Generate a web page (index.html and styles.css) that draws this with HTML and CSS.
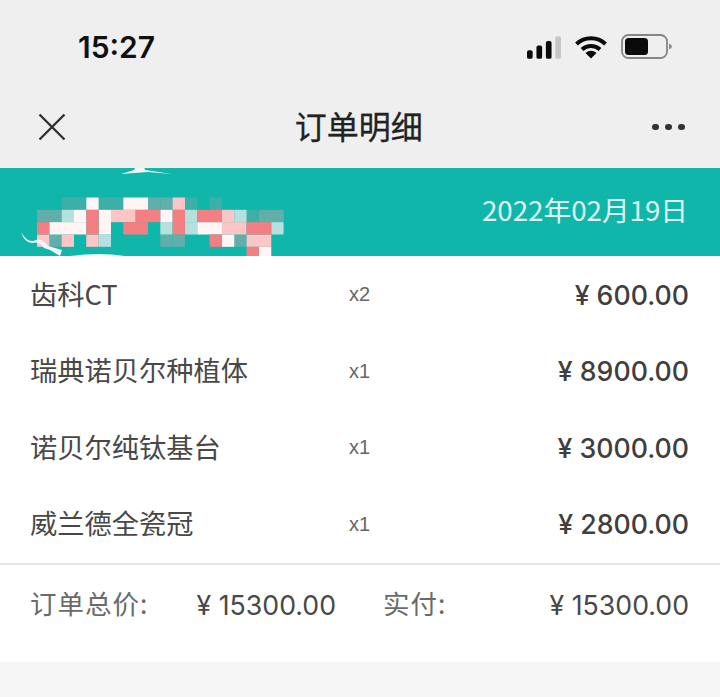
FILE: index.html
```html
<!DOCTYPE html>
<html lang="zh-CN">
<head>
<meta charset="utf-8">
<title>订单明细</title>
<link rel="stylesheet" href="styles.css">
</head>
<body>
<div class="page">
  <div class="status">
    <span class="time">15:27</span>
    <div class="status-icons">
      <svg class="signal" width="34" height="23" viewBox="0 0 36 24">
        <rect x="0" y="15" width="6" height="9" rx="2" fill="#0a0a0a"/>
        <rect x="10" y="10" width="6" height="14" rx="2" fill="#0a0a0a"/>
        <rect x="20" y="5" width="6" height="19" rx="2" fill="#0a0a0a"/>
        <rect x="30" y="0" width="6" height="24" rx="2" fill="#c6c6c6"/>
      </svg>
      <svg class="wifi" width="32" height="24" viewBox="0 0 32 24">
        <path d="M1.5 9 A21 21 0 0 1 30.5 9" fill="none" stroke="#0a0a0a" stroke-width="4"/>
        <path d="M7 14.5 A13 13 0 0 1 25 14.5" fill="none" stroke="#0a0a0a" stroke-width="4"/>
        <path d="M16 23.5 L10.5 18 A8 8 0 0 1 21.5 18 Z" fill="#0a0a0a"/>
      </svg>
      <svg class="battery" width="52" height="26" viewBox="0 0 52 26">
        <rect x="1" y="1" width="45" height="23" rx="6.5" fill="none" stroke="#858585" stroke-width="1.8"/>
        <rect x="4" y="4" width="23" height="17" rx="3.5" fill="#0a0a0a"/>
        <path d="M48 9.5 Q51 11 51 12.5 Q51 14 48 15.5 Z" fill="#8a8a8a"/>
      </svg>
    </div>
  </div>
  <header class="nav">
    <svg class="close" width="28" height="28" viewBox="0 0 28 28">
      <path d="M1.5 1.5 L26.5 26.5 M26.5 1.5 L1.5 26.5" fill="none" stroke="#333" stroke-width="2.4"/>
    </svg>
    <h1 class="title">订单明细</h1>
    <div class="more"><i></i><i></i><i></i></div>
  </header>
  <section class="band">
    <svg class="mosaic" width="720" height="88" viewBox="0 0 720 88">
      <g transform="translate(37 29.5) scale(12.33)">
        <g class="m-a"><rect x="2" y="0" width="2" height="1"/><rect x="5" y="0" width="2" height="1"/><rect x="12" y="0" width="1" height="1"/><rect x="14" y="0" width="1" height="1"/><rect x="17" y="1" width="1" height="1"/></g>
        <g class="m-b"><rect x="0" y="1" width="2" height="1"/><rect x="9" y="0" width="1" height="1"/><rect x="18" y="1" width="2" height="1"/><rect x="1" y="3" width="1" height="1"/><rect x="10" y="0" width="1" height="1"/><rect x="10" y="3" width="1" height="1"/><rect x="11" y="3" width="1" height="1"/><rect x="16" y="3" width="1" height="1"/></g>
        <g class="m-c"><rect x="2" y="1" width="1" height="1"/><rect x="12" y="1" width="1" height="1"/><rect x="16" y="1" width="1" height="1"/><rect x="12" y="2" width="1" height="1"/><rect x="19" y="2" width="1" height="1"/><rect x="10" y="2" width="1" height="1"/><rect x="5" y="3" width="1" height="1"/></g>
        <g class="m-w"><rect x="4" y="0" width="1" height="1"/><rect x="7" y="0" width="2" height="1"/><rect x="3" y="1" width="1" height="1"/><rect x="5" y="1" width="1" height="2"/><rect x="10" y="1" width="1" height="1"/><rect x="1" y="2" width="3" height="1"/><rect x="13" y="2" width="2" height="1"/><rect x="15" y="3" width="1" height="1"/><rect x="18" y="4" width="1" height="0.8"/></g>
        <g class="m-p"><rect x="11" y="0" width="1" height="1"/><rect x="6" y="1" width="2" height="1"/><rect x="15" y="1" width="1" height="1"/><rect x="15" y="2" width="2" height="1"/><rect x="0" y="3" width="1" height="1"/><rect x="2" y="3" width="1" height="1"/><rect x="4" y="3" width="1" height="1"/><rect x="17" y="3" width="2" height="1"/></g>
        <g class="m-r"><rect x="4" y="1" width="1" height="2"/><rect x="8" y="1" width="2" height="1"/><rect x="11" y="1" width="1" height="2"/><rect x="13" y="1" width="2" height="1"/><rect x="0" y="2" width="1" height="1"/><rect x="7" y="2" width="2" height="1"/><rect x="17" y="2" width="2" height="1"/><rect x="14" y="3" width="1" height="1"/><rect x="17" y="4" width="1" height="0.8"/></g>
      </g>
      <path class="tear" d="M21 64 Q25 76 33 75 Q38 73 44 80 L50 82 L60 88 L62 82 L48 78 Q42 70 36 72 Q28 76 21 64 Z"/>
      <path class="tear" d="M121 6 L134 2 L136 -2 L144 -2 L145 2 L172 6 L148 4 Z"/>
      <path class="tear" d="M70 88 Q100 84 125 88 Z"/>
    </svg>
    <span class="date">2022年02月19日</span>
  </section>
  <section class="items">
    <div class="row"><span class="name">齿科CT</span><span class="qty">x2</span><span class="price">¥ 600.00</span></div>
    <div class="row"><span class="name">瑞典诺贝尔种植体</span><span class="qty">x1</span><span class="price">¥ 8900.00</span></div>
    <div class="row"><span class="name">诺贝尔纯钛基台</span><span class="qty">x1</span><span class="price">¥ 3000.00</span></div>
    <div class="row"><span class="name">威兰德全瓷冠</span><span class="qty">x1</span><span class="price">¥ 2800.00</span></div>
  </section>
  <footer class="total">
    <div class="pair"><span class="label">订单总价:</span><span class="amount">¥ 15300.00</span></div>
    <div class="pair"><span class="label">实付:</span><span class="amount">¥ 15300.00</span></div>
  </footer>
</div>
</body>
</html>
```
FILE: styles.css
```css
* { box-sizing: border-box; }
html, body { margin: 0; padding: 0; }
body {
  width: 720px;
  height: 697px;
  overflow: hidden;
  background: #f6f6f6;
  font-family: "Inter", "Noto Sans CJK SC", sans-serif;
}
.page { display: flex; flex-direction: column; height: 697px; }
.status {
  height: 88px;
  background: #efefef;
  display: flex;
  align-items: center;
  justify-content: space-between;
  padding: 6px 47px 0 78px;
}
.time { font: 600 30px/1 "Inter", sans-serif; color: #111; }
.status-icons { display: flex; align-items: center; gap: 14px; }
.nav {
  height: 80px;
  background: #efefef;
  display: flex;
  align-items: center;
  justify-content: space-between;
  padding: 0 35px 2px 38px;
}
.close { display: block; }
.title { margin: 0 1px 0 0; padding-bottom: 4px; font: 400 32px/1 "Noto Sans CJK SC", sans-serif; -webkit-text-stroke: 0.3px #222; color: #222; }
.more { display: flex; gap: 6.5px; }
.more i { width: 6.5px; height: 6.5px; border-radius: 50%; background: #333; }
.band {
  position: relative;
  height: 88px;
  background: #10b6aa;
  display: flex;
  align-items: center;
  justify-content: flex-end;
  padding: 0 32px 4px 0;
}
.mosaic { position: absolute; left: 0; top: 0; display: block; overflow: hidden; filter: blur(0.5px); }
.m-a { fill: #3cafa8; }
.m-b { fill: #62aeaa; }
.m-c { fill: #b6e0dd; }
.m-w { fill: #fff5f5; }
.m-p { fill: #fcc6c6; }
.m-r { fill: #f37f83; }
.tear { fill: #eef8f8; }
.date { font: 400 27.7px/1 "Noto Sans CJK SC", sans-serif; color: #e0f5f3; }
.items { background: #fff; padding-top: 1px; }
.row {
  height: 76.5px;
  display: grid;
  grid-template-columns: 319px 1fr auto;
  align-items: center;
  padding: 0 31px 0 30px;
}
.name { padding-bottom: 4px; font: 400 27.25px/1 "Noto Sans CJK SC", sans-serif; color: #484848; }
.qty { padding-bottom: 2px; font: 400 20px/1 "Liberation Sans", sans-serif; color: #666; }
.price { font: 500 26.7px/1 "Inter", sans-serif; color: #3f3f3f; }
.total {
  height: 99px;
  background: #fff;
  border-top: 2px solid #e6e6e6;
  display: flex;
  gap: 47px;
  padding: 0 31px 17px 30px;
  align-items: center;
}
.pair { flex: 1; display: flex; justify-content: space-between; align-items: center; }
.label { padding-bottom: 3px; font: 400 26.5px/1 "Noto Sans CJK SC", sans-serif; letter-spacing: 1px; color: #6a6a6a; }
.amount { font: 400 26.7px/1 "Inter", sans-serif; color: #484848; }
```
